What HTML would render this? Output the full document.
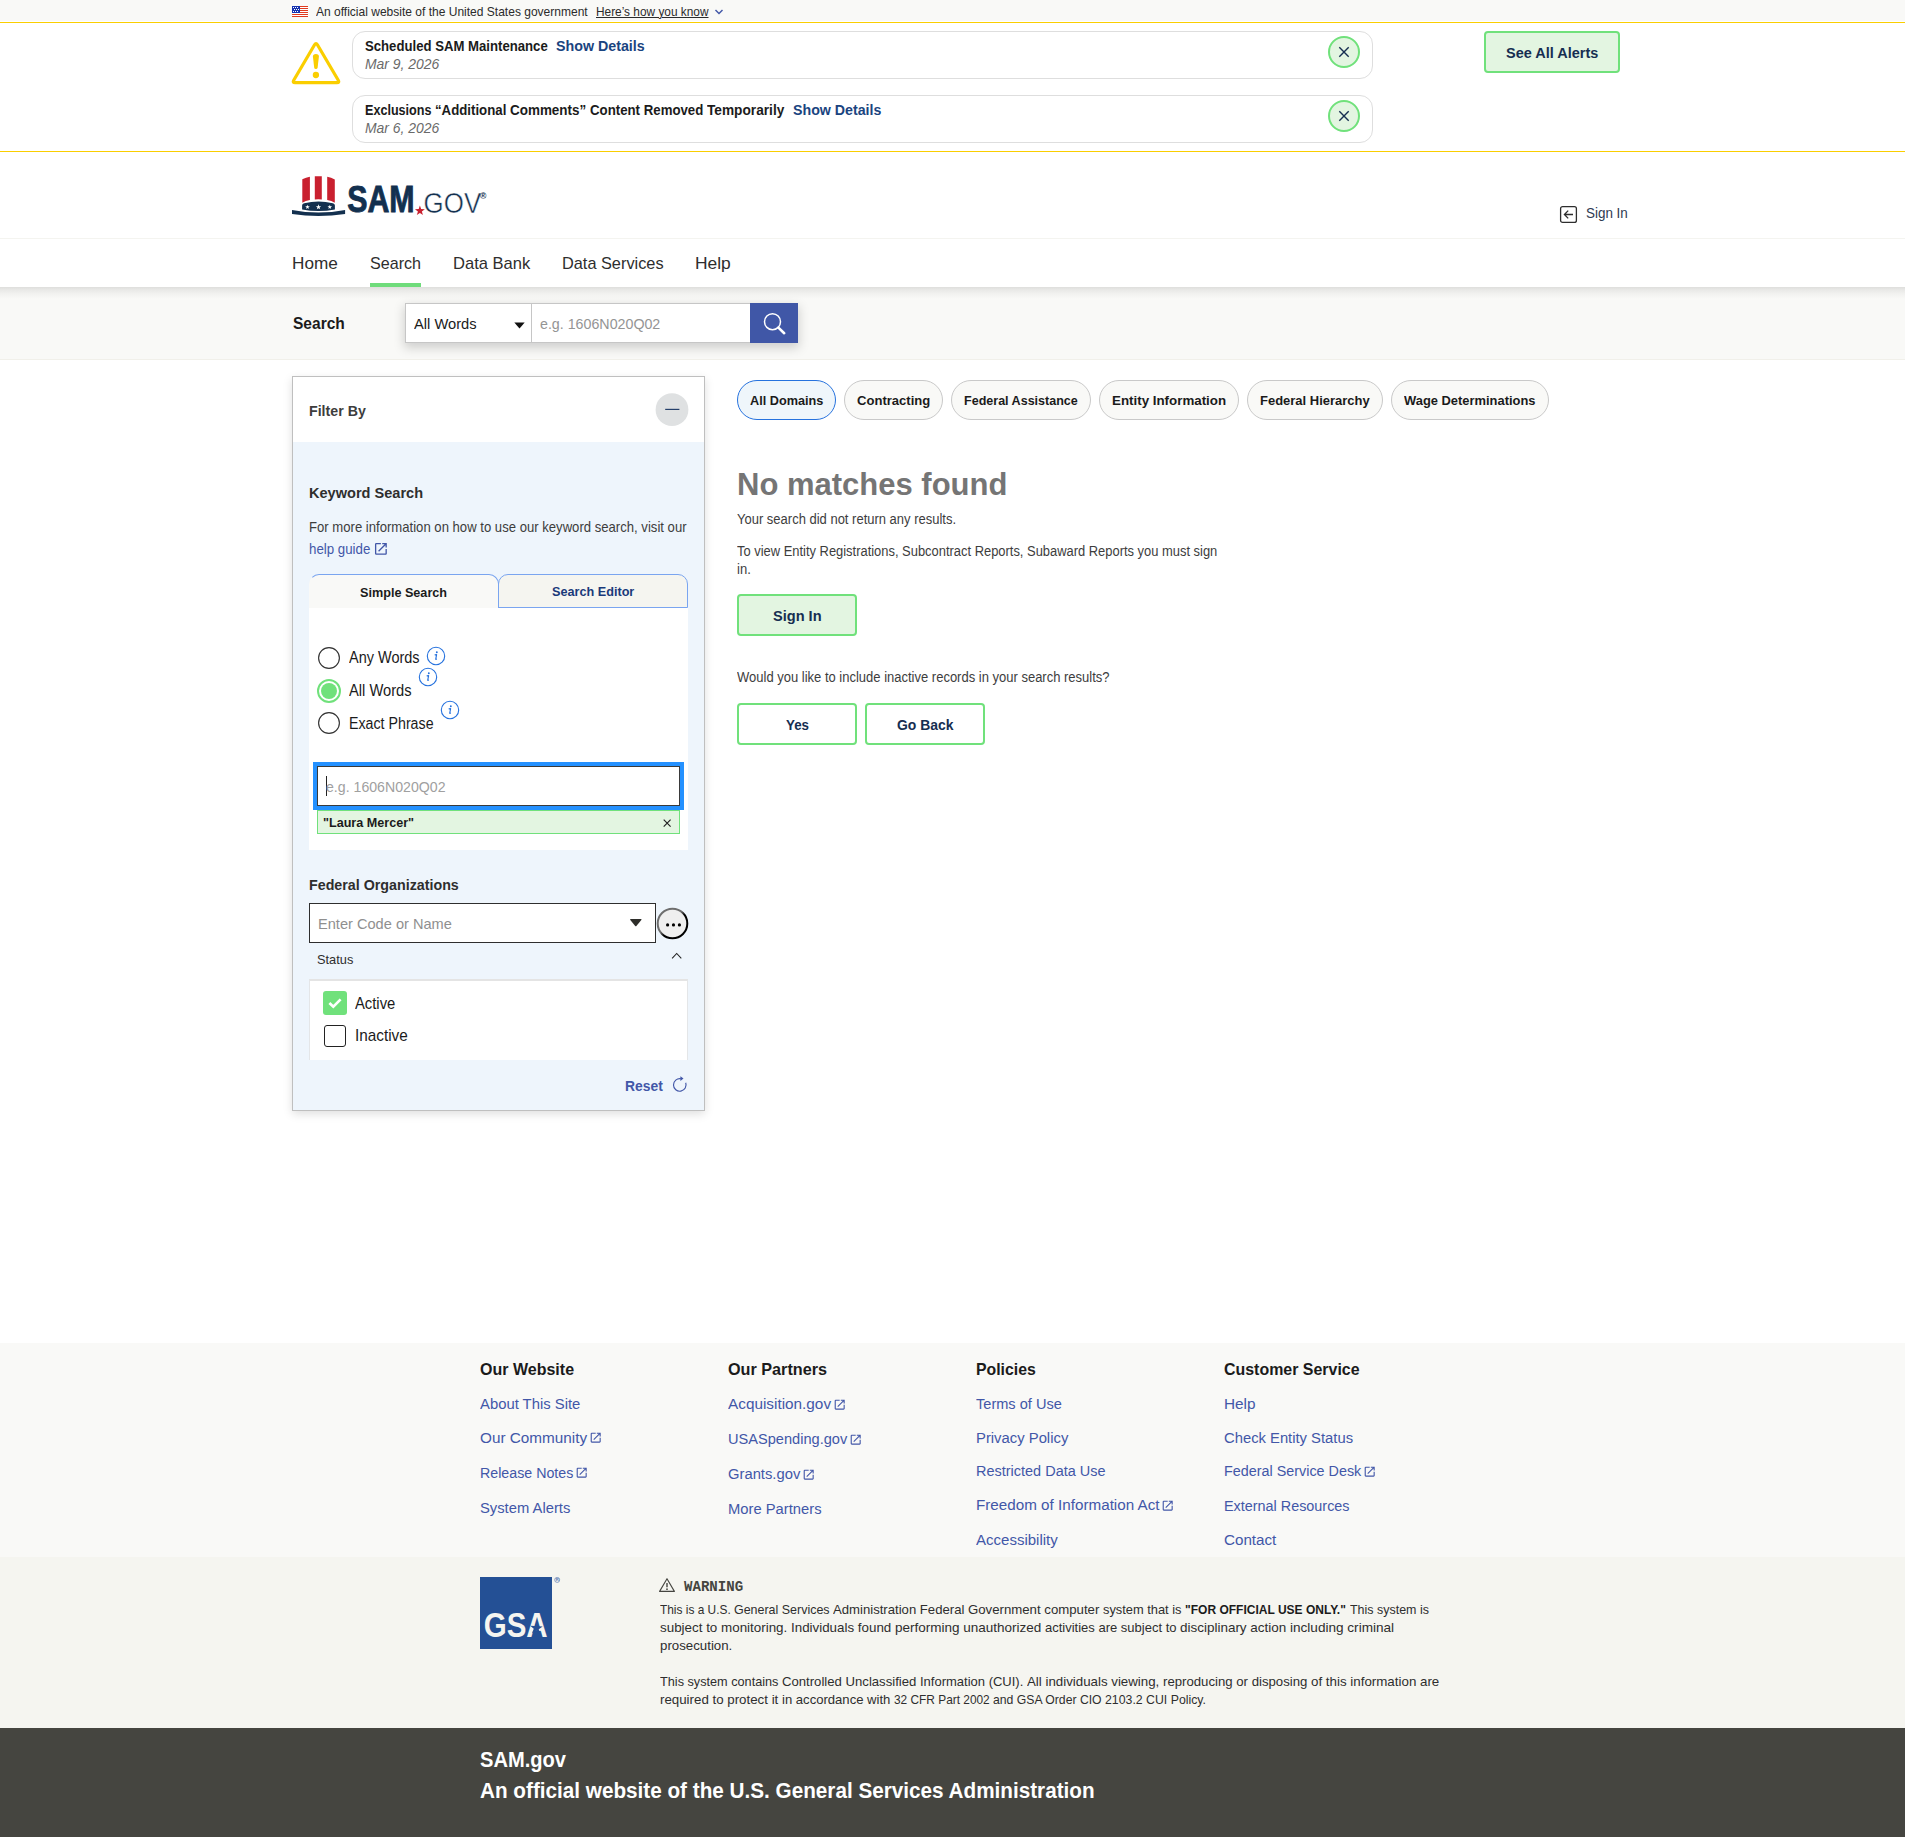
<!DOCTYPE html>
<html lang="en">
<head>
<meta charset="utf-8">
<title>SAM.gov | Search</title>
<style>
html,body{margin:0;padding:0}
body{width:1905px;height:1837px;position:relative;overflow:hidden;background:#fff;font-family:"Liberation Sans",sans-serif;color:#1b1b1b}
.abs,.a,.t{position:absolute;display:block;margin:0;padding:0}
.t{line-height:1;white-space:pre;font-weight:400;text-decoration:none;transform-origin:0 0}
a{color:inherit}
</style>
</head>
<body>
<section class="abs" aria-label="Official government website" style="left:0;top:0;width:1905px;height:21px;background:#f9f9f7"></section>
<svg class="a" style="left:292px;top:6px" width="16" height="11" viewBox="0 0 16 11" shape-rendering="crispEdges"><rect width="16" height="11" fill="#fff"/><rect y="0" width="16" height="1" fill="#e03a1e"/><rect y="2" width="16" height="1" fill="#e03a1e"/><rect y="4" width="16" height="1" fill="#e03a1e"/><rect y="6" width="16" height="1" fill="#e03a1e"/><rect y="8" width="16" height="1" fill="#e03a1e"/><rect y="10" width="16" height="1" fill="#e03a1e"/><rect width="8" height="7" fill="#1633b0"/><rect x="1" y="1" width="1" height="1" fill="#fff"/><rect x="3" y="1" width="1" height="1" fill="#fff"/><rect x="5" y="1" width="1" height="1" fill="#fff"/><rect x="2" y="3" width="1" height="1" fill="#fff"/><rect x="4" y="3" width="1" height="1" fill="#fff"/><rect x="6" y="3" width="1" height="1" fill="#fff"/><rect x="1" y="5" width="1" height="1" fill="#fff"/><rect x="3" y="5" width="1" height="1" fill="#fff"/><rect x="5" y="5" width="1" height="1" fill="#fff"/></svg>
<span class="t" style="left:316.00px;top:6.06px;font-size:12.2px;color:#2b2b2b;transform:scaleX(0.9862);">An official website of the United States government</span>
<a class="t" style="left:596.00px;top:6.06px;font-size:12.2px;color:#2b2b2b;transform:scaleX(0.9730);text-decoration:underline;text-decoration-thickness:1px;text-underline-offset:0.5px;">Here’s how you know</a>
<svg class="a" style="left:714px;top:8px" width="10" height="8" viewBox="0 0 10 8"><path d="M1.5 2 L5 5.6 L8.5 2" fill="none" stroke="#4257a8" stroke-width="1.4"/></svg>
<section class="abs" aria-label="Alerts" style="left:0;top:22px;width:1905px;height:130px;border-top:1px solid #face00;border-bottom:1px solid #face00;box-sizing:border-box;background:#fff"></section>
<svg class="a" style="left:290px;top:38px" width="52" height="48" viewBox="0 0 52 48"><path d="M24.58 6.81 Q26.00 4.40 27.42 6.81 L48.28 42.29 Q49.70 44.70 46.90 44.70 L5.10 44.70 Q2.30 44.70 3.72 42.29 Z" fill="none" stroke="#face00" stroke-width="3.2" stroke-linejoin="round"/><path d="M22.9 18.4 Q22.8 15.9 25.9 15.9 Q29 15.9 28.9 18.4 L27.6 29.7 Q27.4 31.1 25.9 31.1 Q24.4 31.1 24.2 29.7 Z" fill="#face00"/><circle cx="25.9" cy="37" r="3.15" fill="#face00"/></svg>
<div class="abs" style="left:352px;top:31px;width:1020.5px;height:47.5px;border:1px solid #dedede;border-radius:13px;box-sizing:border-box;background:#fff"></div>
<span class="t" style="left:365.00px;top:39.06px;font-size:14.6px;font-weight:700;transform:scaleX(0.9012);">Scheduled SAM Maintenance</span>
<a class="t" style="left:556.00px;top:39.06px;font-size:14.6px;font-weight:700;color:#1a4480;transform:scaleX(0.9766);">Show Details</a>
<span class="t" style="left:365.00px;top:57.06px;font-size:14.6px;color:#6a6a6a;font-style:italic;transform:scaleX(0.9539);">Mar 9, 2026</span>
<svg class="a" style="left:1328px;top:36px" width="32" height="32" viewBox="0 0 32 32"><circle cx="16" cy="16" r="15" fill="#e3f5e1" stroke="#70e17b" stroke-width="2"/><path d="M11.3 11.3 L20.7 20.7 M20.7 11.3 L11.3 20.7" stroke="#162e51" stroke-width="1.4"/></svg>
<div class="abs" style="left:352px;top:95px;width:1020.5px;height:47.5px;border:1px solid #dedede;border-radius:13px;box-sizing:border-box;background:#fff"></div>
<span class="t" style="left:365.00px;top:103.06px;font-size:14.6px;font-weight:700;transform:scaleX(0.8630);">Exclusions </span>
<span class="t" style="left:435.00px;top:103.06px;font-size:14.6px;font-weight:700;transform:scaleX(0.9069);">“Additional </span>
<span class="t" style="left:510.00px;top:103.06px;font-size:14.6px;font-weight:700;transform:scaleX(0.9220);">Comments” </span>
<span class="t" style="left:590.00px;top:103.06px;font-size:14.6px;font-weight:700;transform:scaleX(0.9075);">Content Removed </span>
<span class="t" style="left:707.00px;top:103.06px;font-size:14.6px;font-weight:700;transform:scaleX(0.9375);">Temporarily</span>
<a class="t" style="left:793.00px;top:103.06px;font-size:14.6px;font-weight:700;color:#1a4480;transform:scaleX(0.9722);">Show Details</a>
<span class="t" style="left:365.00px;top:121.07px;font-size:14.6px;color:#6a6a6a;font-style:italic;transform:scaleX(0.9539);">Mar 6, 2026</span>
<svg class="a" style="left:1328px;top:100px" width="32" height="32" viewBox="0 0 32 32"><circle cx="16" cy="16" r="15" fill="#e3f5e1" stroke="#70e17b" stroke-width="2"/><path d="M11.3 11.3 L20.7 20.7 M20.7 11.3 L11.3 20.7" stroke="#162e51" stroke-width="1.4"/></svg>
<a class="abs" style="left:1484px;top:31px;width:136px;height:42px;border:2px solid #70e17b;border-radius:4px;box-sizing:border-box;background:#e3f5e1"></a>
<span class="t" style="left:1506.00px;top:46.05px;font-size:14.8px;font-weight:700;color:#162e51;transform:scaleX(0.9787);">See All Alerts</span>
<header class="abs" style="left:0;top:152px;width:1905px;height:86px;background:#fff;border-bottom:1px solid #f4f4f0;box-sizing:content-box"></header>
<svg class="a" style="left:288px;top:170px" width="210" height="52" viewBox="288 170 210 52">
<path d="M302.3 179.2 Q306 177.4 309.9 176.8 V200.1 Q305.6 200.8 302.3 202.7 Z" fill="#c9202f"/>
<path d="M314.8 176.3 Q318.3 176.1 321.8 176.3 V199.4 Q318.3 199.2 314.8 199.4 Z" fill="#c9202f"/>
<path d="M327.2 176.8 Q331.2 177.4 334.8 179.4 V202.7 Q331.5 200.8 327.2 200.1 Z" fill="#c9202f"/>
<path d="M302.1 209.4 V205.4 Q302.1 203.7 304.2 203.3 Q318.5 199.6 332.8 203.3 Q334.9 203.7 334.9 205.4 V209.4 Q318.5 212.4 302.1 209.4 Z" fill="#13304f"/>
<path d="M292 210.1 Q318.5 215.1 345.1 210.1 L345.1 214.1 Q318.5 217.9 292 214.1 Z" fill="#13304f"/>
<g fill="#fff"><path d="M0 -2 L0.47 -0.65 L1.9 -0.62 L0.76 0.25 L1.18 1.62 L0 0.8 L-1.18 1.62 L-0.76 0.25 L-1.9 -0.62 L-0.47 -0.65 Z" transform="translate(307.5 207.1) scale(1.2)"/><path d="M0 -2 L0.47 -0.65 L1.9 -0.62 L0.76 0.25 L1.18 1.62 L0 0.8 L-1.18 1.62 L-0.76 0.25 L-1.9 -0.62 L-0.47 -0.65 Z" transform="translate(318.5 207.1) scale(1.4)"/><path d="M0 -2 L0.47 -0.65 L1.9 -0.62 L0.76 0.25 L1.18 1.62 L0 0.8 L-1.18 1.62 L-0.76 0.25 L-1.9 -0.62 L-0.47 -0.65 Z" transform="translate(329.8 207.1) scale(1.2)"/></g>
<text x="347.2" y="212.4" font-family="Liberation Sans, sans-serif" font-weight="700" font-size="36.9" fill="#13304f" stroke="#13304f" stroke-width="0.9" textLength="67.4" lengthAdjust="spacingAndGlyphs">SAM</text>
<path d="M0 -2 L0.47 -0.65 L1.9 -0.62 L0.76 0.25 L1.18 1.62 L0 0.8 L-1.18 1.62 L-0.76 0.25 L-1.9 -0.62 L-0.47 -0.65 Z" transform="translate(419.9 210.8) scale(2.6)" fill="#c9202f"/>
<text x="423.6" y="212.7" font-family="Liberation Sans, sans-serif" font-size="30" fill="#13304f" stroke="#fff" stroke-width="0.5" textLength="57.6" lengthAdjust="spacingAndGlyphs">GOV</text>
<text x="480" y="199" font-family="Liberation Sans, sans-serif" font-size="8.6" font-weight="700" fill="#13304f">®</text>
</svg>
<svg class="a" style="left:1558px;top:204px" width="21" height="21" viewBox="0 0 21 21"><rect x="2.6" y="2.6" width="15.8" height="15.8" rx="2" fill="none" stroke="#2e2e2e" stroke-width="1.3"/><path d="M15 10.5 H6.6 M10.2 6.6 L6.4 10.5 L10.2 14.4" fill="none" stroke="#2e2e2e" stroke-width="1.3"/></svg>
<a class="t" style="left:1586.00px;top:206.07px;font-size:14.6px;color:#2e3a52;transform:scaleX(0.9199);">Sign In</a>
<nav class="abs" style="left:0;top:239px;width:1905px;height:48px;background:#fff"></nav>
<a class="t" style="left:292.00px;top:255.06px;font-size:17px;color:#2e2e2e;transform:scaleX(1.0097);">Home</a>
<a class="t" style="left:370.00px;top:255.06px;font-size:17px;color:#2e2e2e;transform:scaleX(0.9476);">Search</a>
<a class="t" style="left:453.00px;top:255.06px;font-size:17px;color:#2e2e2e;transform:scaleX(0.9737);">Data Bank</a>
<a class="t" style="left:562.00px;top:255.06px;font-size:17px;color:#2e2e2e;transform:scaleX(0.9596);">Data Services</a>
<a class="t" style="left:695.00px;top:255.06px;font-size:17px;color:#2e2e2e;transform:scaleX(1.0238);">Help</a>
<div class="abs" style="left:370px;top:283px;width:51px;height:4px;background:#6fdc7b"></div>
<section class="abs" aria-label="Search" style="left:0;top:287px;width:1905px;height:73px;background:linear-gradient(#dededc 0,#e9e9e7 3px,#f2f2f0 7px,#f9f9f7 12px);border-bottom:1px solid #f1f0ea;box-sizing:border-box"></section>
<span class="t" style="left:293.00px;top:315.06px;font-size:17px;font-weight:700;transform:scaleX(0.9135);">Search</span>
<div class="abs" style="left:405px;top:303px;width:393px;height:40px;box-shadow:0 4px 10px 1px rgba(0,0,0,.17);background:#fff"></div>
<div class="abs" style="left:405px;top:303px;width:127px;height:40px;border:1px solid #c6c6c6;box-sizing:border-box;background:#fff"></div>
<div class="abs" style="left:531px;top:303px;width:219.5px;height:40px;border:1px solid #c6c6c6;box-sizing:border-box;background:#fff"></div>
<span class="t" style="left:414.00px;top:316.06px;font-size:15.2px;transform:scaleX(0.9667);">All Words</span>
<svg class="a" style="left:513.5px;top:321.5px" width="11" height="7" viewBox="0 0 11 7"><path d="M0.3 0.4 H10.7 L5.5 6.4 Z" fill="#111"/></svg>
<span class="t" style="left:540.00px;top:317.07px;font-size:14.6px;color:#949494;transform:scaleX(0.9753);">e.g. 1606N020Q02</span>
<div class="abs" style="left:750px;top:303px;width:48px;height:40px;background:#4057a7"></div>
<svg class="a" style="left:750px;top:303px" width="48" height="40" viewBox="0 0 48 40"><circle cx="22.5" cy="18.7" r="8" fill="none" stroke="#fff" stroke-width="1.5"/><path d="M28.4 24.6 L34.2 30.2" stroke="#fff" stroke-width="2.6" stroke-linecap="round"/></svg>
<aside class="abs" style="left:292px;top:376px;width:413px;height:734.5px;border:1px solid #bfbfbf;box-sizing:border-box;background:#eef5fc;box-shadow:0 3px 9px rgba(0,0,0,.13)"></aside>
<div class="abs" style="left:293px;top:377px;width:411px;height:65px;background:#fff"></div>
<h2 class="t" style="left:309.00px;top:403.06px;font-size:15.2px;font-weight:700;color:#3d3d3d;transform:scaleX(0.9347);">Filter By</h2>
<svg class="a" style="left:654.7px;top:392.8px" width="34" height="34" viewBox="0 0 34 34"><circle cx="17" cy="16.7" r="16.4" fill="#dfe1e2"/><path d="M10.2 16.4 H24.4" stroke="#25406b" stroke-width="1.2"/></svg>
<h3 class="t" style="left:309.00px;top:486.05px;font-size:14.8px;font-weight:700;color:#2e2e2e;transform:scaleX(0.9835);">Keyword Search</h3>
<span class="t" style="left:309.00px;top:520.06px;font-size:14.2px;color:#3d3d3d;transform:scaleX(0.9243);">For more information on how to use our keyword search, visit our</span>
<a class="t" style="left:309.00px;top:542.06px;font-size:14.2px;color:#4257a8;transform:scaleX(0.9361);">help guide</a>
<svg class="a" style="left:373.32px;top:541.32px" width="15.8" height="15.8" viewBox="0 0 24 24" fill="#4257a8"><path d="M19 19H5V5h7V3H5a2 2 0 0 0-2 2v14a2 2 0 0 0 2 2h14c1.1 0 2-.9 2-2v-7h-2v7zM14 3v2h3.59l-9.83 9.83 1.41 1.41L19 6.41V10h2V3h-7z"/></svg>
<div class="abs" style="left:498px;top:574px;width:190px;height:33.5px;border:1px solid #7aa5f0;border-radius:10px 10px 0 0;box-sizing:border-box;background:#f5f5f0"></div>
<div class="abs" style="left:309px;top:574px;width:189.5px;height:34.5px;border:1px solid #7aa5f0;border-bottom:none;border-left-color:transparent;border-radius:10px 10px 0 0;box-sizing:border-box;background:#f9f9f7"></div>
<span class="t" style="left:360.00px;top:586.05px;font-size:13.4px;font-weight:700;transform:scaleX(0.9432);">Simple Search</span>
<span class="t" style="left:552.00px;top:585.05px;font-size:13.4px;font-weight:700;color:#1a3a7a;transform:scaleX(0.9451);">Search Editor</span>
<div class="abs" style="left:309px;top:608px;width:379.3px;height:242px;background:#fff"></div>
<svg class="a" style="left:316px;top:645px" width="26" height="26" viewBox="0 0 26 26"><circle cx="13" cy="13" r="10.4" fill="#fff" stroke="#333" stroke-width="1.15"/></svg>
<label class="t" style="left:349.00px;top:650.06px;font-size:15.8px;transform:scaleX(0.9166);">Any Words</label>
<svg class="a" style="left:426.25px;top:645.9px" width="20" height="20" viewBox="0 0 20 20"><circle cx="10" cy="10" r="8.7" fill="none" stroke="#2672de" stroke-width="1.1"/><circle cx="10.8" cy="6.3" r="0.95" fill="#2672de"/><path d="M9.1 8.9 L10.6 8.6 L9.7 13.3 L10.5 13.1" fill="none" stroke="#2672de" stroke-width="1.15" stroke-linecap="round" stroke-linejoin="round"/></svg>
<svg class="a" style="left:316px;top:678px" width="26" height="26" viewBox="0 0 26 26"><circle cx="13" cy="13" r="11" fill="#fff" stroke="#70e17b" stroke-width="2"/><circle cx="13" cy="13" r="8" fill="#70e17b"/></svg>
<label class="t" style="left:349.00px;top:683.06px;font-size:15.8px;transform:scaleX(0.9292);">All Words</label>
<svg class="a" style="left:418.25px;top:666.9px" width="20" height="20" viewBox="0 0 20 20"><circle cx="10" cy="10" r="8.7" fill="none" stroke="#2672de" stroke-width="1.1"/><circle cx="10.8" cy="6.3" r="0.95" fill="#2672de"/><path d="M9.1 8.9 L10.6 8.6 L9.7 13.3 L10.5 13.1" fill="none" stroke="#2672de" stroke-width="1.15" stroke-linecap="round" stroke-linejoin="round"/></svg>
<svg class="a" style="left:316px;top:709.6px" width="26" height="26" viewBox="0 0 26 26"><circle cx="13" cy="13" r="10.4" fill="#fff" stroke="#333" stroke-width="1.15"/></svg>
<label class="t" style="left:349.00px;top:716.06px;font-size:15.8px;transform:scaleX(0.8999);">Exact Phrase</label>
<svg class="a" style="left:440.25px;top:700px" width="20" height="20" viewBox="0 0 20 20"><circle cx="10" cy="10" r="8.7" fill="none" stroke="#2672de" stroke-width="1.1"/><circle cx="10.8" cy="6.3" r="0.95" fill="#2672de"/><path d="M9.1 8.9 L10.6 8.6 L9.7 13.3 L10.5 13.1" fill="none" stroke="#2672de" stroke-width="1.15" stroke-linecap="round" stroke-linejoin="round"/></svg>
<div class="abs" style="left:317px;top:766px;width:363px;height:40.3px;border:1px solid #3a3a3a;box-sizing:border-box;background:#fff;outline:4px solid #2491ff;outline-offset:0"></div>
<div class="abs" style="left:326px;top:776px;width:1px;height:20px;background:#222"></div>
<span class="t" style="left:326.00px;top:780.06px;font-size:14.6px;color:#a0a0a0;transform:scaleX(0.9692);">e.g. 1606N020Q02</span>
<div class="abs" style="left:317px;top:810px;width:363px;height:24px;border:1px solid #70e17b;box-sizing:border-box;background:#e3f5e1"></div>
<span class="t" style="left:323.00px;top:817.05px;font-size:12.7px;font-weight:700;transform:scaleX(0.9927);">"Laura Mercer"</span>
<svg class="a" style="left:662px;top:818px" width="10" height="10" viewBox="0 0 10 10"><path d="M1.7 1.6 L8.6 8.6 M8.6 1.6 L1.7 8.6" stroke="#222" stroke-width="1.15"/></svg>
<h3 class="t" style="left:309.00px;top:878.05px;font-size:14.8px;font-weight:700;color:#2e2e2e;transform:scaleX(0.9639);">Federal Organizations</h3>
<div class="abs" style="left:309px;top:903px;width:347px;height:39.5px;border:1px solid #2e2e2e;box-sizing:border-box;background:#fff"></div>
<span class="t" style="left:318.00px;top:917.06px;font-size:14.6px;color:#8f8f8f;">Enter Code or Name</span>
<svg class="a" style="left:629.4px;top:918.2px" width="14" height="10" viewBox="0 0 14 10"><path d="M1.7 1 H11.9 Q13 1 12.3 1.9 L7.4 8 Q6.8 8.7 6.2 8 L1.3 1.9 Q0.6 1 1.7 1 Z" fill="#2e2e2a"/></svg>
<svg class="a" style="left:655.5px;top:906.6px" width="33" height="33" viewBox="0 0 33 33"><defs><linearGradient id="ob" x1="0.15" y1="0.15" x2="0.85" y2="0.85"><stop offset="0.42" stop-color="#6e6e6e"/><stop offset="0.58" stop-color="#000"/></linearGradient></defs><circle cx="16.5" cy="16.5" r="14.8" fill="#efefef" stroke="url(#ob)" stroke-width="2"/><circle cx="11.6" cy="17.9" r="1.6" fill="#000"/><circle cx="17.5" cy="17.9" r="1.6" fill="#000"/><circle cx="23.4" cy="17.9" r="1.6" fill="#000"/></svg>
<span class="t" style="left:317.00px;top:953.05px;font-size:13px;color:#2e2e2e;transform:scaleX(0.9848);">Status</span>
<svg class="a" style="left:670px;top:949.5px" width="14" height="11" viewBox="0 0 14 11"><path d="M2.1 8.3 L6.7 3.4 L11.3 8.3" fill="none" stroke="#222" stroke-width="1.05"/></svg>
<div class="abs" style="left:309px;top:979px;width:379.3px;height:80.5px;border:1px solid #e4e6e8;border-top:2px solid #e4e4e4;border-bottom:none;box-sizing:border-box;background:#fff"></div>
<svg class="a" style="left:323px;top:991px" width="24" height="24" viewBox="0 0 24 24"><rect width="24" height="24" rx="3" fill="#70e17b"/><path d="M6.4 12 L10.3 15.7 L17.6 8.4" fill="none" stroke="#fff" stroke-width="2.7"/></svg>
<label class="t" style="left:355.00px;top:996.06px;font-size:15.7px;transform:scaleX(0.9430);">Active</label>
<div class="abs" style="left:324px;top:1025px;width:22px;height:22px;border:1.5px solid #222;border-radius:3px;box-sizing:border-box;background:#fff"></div>
<label class="t" style="left:355.00px;top:1028.06px;font-size:15.7px;transform:scaleX(0.9764);">Inactive</label>
<a class="t" style="left:625.00px;top:1079.05px;font-size:14.8px;font-weight:700;color:#4257a8;transform:scaleX(0.9377);">Reset</a>
<svg class="a" style="left:671px;top:1075px" width="18" height="18" viewBox="0 0 18 18"><path d="M14.72 7.75 A6.3 6.3 0 1 1 9.89 3.70" fill="none" stroke="#4257a8" stroke-width="1.15"/><path d="M9.40 1.20 L12.50 3.60 L9.40 6.00 Z" fill="#4257a8"/></svg>
<a class="abs" style="left:737px;top:380px;width:99px;height:40px;border:1px solid #2672de;background:#eff6fb;border-radius:20px;box-sizing:border-box"></a>
<span class="t" style="left:750.00px;top:394.05px;font-size:13.3px;font-weight:700;transform:scaleX(0.9539);">All Domains</span>
<a class="abs" style="left:844px;top:380px;width:99px;height:40px;border:1px solid #c9c9c9;background:#f9f9f7;border-radius:20px;box-sizing:border-box"></a>
<span class="t" style="left:857.00px;top:394.05px;font-size:13.3px;font-weight:700;transform:scaleX(0.9825);">Contracting</span>
<a class="abs" style="left:951px;top:380px;width:139.75px;height:40px;border:1px solid #c9c9c9;background:#f9f9f7;border-radius:20px;box-sizing:border-box"></a>
<span class="t" style="left:964.00px;top:394.05px;font-size:13.3px;font-weight:700;transform:scaleX(0.9427);">Federal Assistance</span>
<a class="abs" style="left:1099px;top:380px;width:140px;height:40px;border:1px solid #c9c9c9;background:#f9f9f7;border-radius:20px;box-sizing:border-box"></a>
<span class="t" style="left:1112.00px;top:394.05px;font-size:13.3px;font-weight:700;transform:scaleX(1.0029);">Entity Information</span>
<a class="abs" style="left:1247px;top:380px;width:136px;height:40px;border:1px solid #c9c9c9;background:#f9f9f7;border-radius:20px;box-sizing:border-box"></a>
<span class="t" style="left:1260.00px;top:394.05px;font-size:13.3px;font-weight:700;transform:scaleX(0.9765);">Federal Hierarchy</span>
<a class="abs" style="left:1391px;top:380px;width:157.5999999999999px;height:40px;border:1px solid #c9c9c9;background:#f9f9f7;border-radius:20px;box-sizing:border-box"></a>
<span class="t" style="left:1404.00px;top:394.05px;font-size:13.3px;font-weight:700;transform:scaleX(0.9707);">Wage Determinations</span>
<h1 class="t" style="left:737.00px;top:469.06px;font-size:31px;font-weight:700;color:#757575;">No matches found</h1>
<p class="t" style="left:737.00px;top:513.06px;font-size:13.8px;color:#3d3d3d;transform:scaleX(0.9416);">Your search did not return any results.</p>
<p class="t" style="left:737.00px;top:545.06px;font-size:13.8px;color:#3d3d3d;transform:scaleX(0.9362);">To view Entity Registrations, Subcontract Reports, Subaward Reports you must sign</p>
<p class="t" style="left:737.00px;top:563.06px;font-size:13.8px;color:#3d3d3d;transform:scaleX(0.9466);">in.</p>
<a class="abs" style="left:737px;top:594px;width:120px;height:42px;border:2px solid #70e17b;border-radius:4px;box-sizing:border-box;background:#e3f5e1"></a>
<span class="t" style="left:773.00px;top:609.05px;font-size:14.8px;font-weight:700;color:#162e51;transform:scaleX(0.9842);">Sign In</span>
<p class="t" style="left:737.00px;top:671.06px;font-size:13.8px;color:#3d3d3d;transform:scaleX(0.9421);">Would you like to include inactive records in your search results?</p>
<a class="abs" style="left:737px;top:703px;width:120px;height:42px;border:2px solid #70e17b;border-radius:4px;box-sizing:border-box;background:#fff"></a>
<span class="t" style="left:786.00px;top:718.05px;font-size:14.8px;font-weight:700;color:#162e51;transform:scaleX(0.9034);">Yes</span>
<a class="abs" style="left:865px;top:703px;width:120px;height:42px;border:2px solid #70e17b;border-radius:4px;box-sizing:border-box;background:#fff"></a>
<span class="t" style="left:897.00px;top:718.05px;font-size:14.8px;font-weight:700;color:#162e51;transform:scaleX(0.9418);">Go Back</span>
<footer class="abs" style="left:0;top:1343px;width:1905px;height:214px;background:#f9f9f7"></footer>
<div class="abs" style="left:0px;top:1557px;width:1905px;height:171px;background:#f5f5f0"></div>
<div class="abs" style="left:0px;top:1728px;width:1905px;height:109px;background:#454540"></div>
<h4 class="t" style="left:480.00px;top:1361.06px;font-size:16.2px;font-weight:700;transform:scaleX(0.9895);">Our Website</h4>
<h4 class="t" style="left:728.00px;top:1361.06px;font-size:16.2px;font-weight:700;">Our Partners</h4>
<h4 class="t" style="left:976.00px;top:1361.06px;font-size:16.2px;font-weight:700;transform:scaleX(0.9773);">Policies</h4>
<h4 class="t" style="left:1224.00px;top:1361.06px;font-size:16.2px;font-weight:700;transform:scaleX(0.9846);">Customer Service</h4>
<a class="t" style="left:480.00px;top:1396.05px;font-size:15.2px;color:#4257a8;transform:scaleX(0.9765);">About This Site</a>
<a class="t" style="left:480.00px;top:1430.05px;font-size:15.2px;color:#4257a8;transform:scaleX(1.0066);">Our Community</a>
<svg class="a" style="left:588.78px;top:1430.92px" width="13.4" height="13.4" viewBox="0 0 24 24" fill="#4257a8"><path d="M19 19H5V5h7V3H5a2 2 0 0 0-2 2v14a2 2 0 0 0 2 2h14c1.1 0 2-.9 2-2v-7h-2v7zM14 3v2h3.59l-9.83 9.83 1.41 1.41L19 6.41V10h2V3h-7z"/></svg>
<a class="t" style="left:480.00px;top:1465.05px;font-size:15.2px;color:#4257a8;transform:scaleX(0.9365);">Release Notes</a>
<svg class="a" style="left:575.03px;top:1465.92px" width="13.4" height="13.4" viewBox="0 0 24 24" fill="#4257a8"><path d="M19 19H5V5h7V3H5a2 2 0 0 0-2 2v14a2 2 0 0 0 2 2h14c1.1 0 2-.9 2-2v-7h-2v7zM14 3v2h3.59l-9.83 9.83 1.41 1.41L19 6.41V10h2V3h-7z"/></svg>
<a class="t" style="left:480.00px;top:1500.05px;font-size:15.2px;color:#4257a8;transform:scaleX(0.9726);">System Alerts</a>
<a class="t" style="left:728.00px;top:1396.05px;font-size:15.2px;color:#4257a8;transform:scaleX(1.0087);">Acquisition.gov</a>
<svg class="a" style="left:832.78px;top:1397.92px" width="13.4" height="13.4" viewBox="0 0 24 24" fill="#4257a8"><path d="M19 19H5V5h7V3H5a2 2 0 0 0-2 2v14a2 2 0 0 0 2 2h14c1.1 0 2-.9 2-2v-7h-2v7zM14 3v2h3.59l-9.83 9.83 1.41 1.41L19 6.41V10h2V3h-7z"/></svg>
<a class="t" style="left:728.00px;top:1431.05px;font-size:15.2px;color:#4257a8;transform:scaleX(0.9611);">USASpending.gov</a>
<svg class="a" style="left:849.03px;top:1432.92px" width="13.4" height="13.4" viewBox="0 0 24 24" fill="#4257a8"><path d="M19 19H5V5h7V3H5a2 2 0 0 0-2 2v14a2 2 0 0 0 2 2h14c1.1 0 2-.9 2-2v-7h-2v7zM14 3v2h3.59l-9.83 9.83 1.41 1.41L19 6.41V10h2V3h-7z"/></svg>
<a class="t" style="left:728.00px;top:1466.05px;font-size:15.2px;color:#4257a8;transform:scaleX(0.9731);">Grants.gov</a>
<svg class="a" style="left:802.03px;top:1467.92px" width="13.4" height="13.4" viewBox="0 0 24 24" fill="#4257a8"><path d="M19 19H5V5h7V3H5a2 2 0 0 0-2 2v14a2 2 0 0 0 2 2h14c1.1 0 2-.9 2-2v-7h-2v7zM14 3v2h3.59l-9.83 9.83 1.41 1.41L19 6.41V10h2V3h-7z"/></svg>
<a class="t" style="left:728.00px;top:1501.05px;font-size:15.2px;color:#4257a8;transform:scaleX(0.9721);">More Partners</a>
<a class="t" style="left:976.00px;top:1396.05px;font-size:15.2px;color:#4257a8;transform:scaleX(0.9590);">Terms of Use</a>
<a class="t" style="left:976.00px;top:1430.05px;font-size:15.2px;color:#4257a8;transform:scaleX(0.9764);">Privacy Policy</a>
<a class="t" style="left:976.00px;top:1463.05px;font-size:15.2px;color:#4257a8;transform:scaleX(0.9532);">Restricted Data Use</a>
<a class="t" style="left:976.00px;top:1497.05px;font-size:15.2px;color:#4257a8;transform:scaleX(1.0020);">Freedom of Information Act</a>
<svg class="a" style="left:1161.28px;top:1498.92px" width="13.4" height="13.4" viewBox="0 0 24 24" fill="#4257a8"><path d="M19 19H5V5h7V3H5a2 2 0 0 0-2 2v14a2 2 0 0 0 2 2h14c1.1 0 2-.9 2-2v-7h-2v7zM14 3v2h3.59l-9.83 9.83 1.41 1.41L19 6.41V10h2V3h-7z"/></svg>
<a class="t" style="left:976.00px;top:1532.05px;font-size:15.2px;color:#4257a8;transform:scaleX(0.9889);">Accessibility</a>
<a class="t" style="left:1224.00px;top:1396.05px;font-size:15.2px;color:#4257a8;transform:scaleX(1.0096);">Help</a>
<a class="t" style="left:1224.00px;top:1430.05px;font-size:15.2px;color:#4257a8;transform:scaleX(0.9737);">Check Entity Status</a>
<a class="t" style="left:1224.00px;top:1463.05px;font-size:15.2px;color:#4257a8;transform:scaleX(0.9457);">Federal Service Desk</a>
<svg class="a" style="left:1363.03px;top:1464.92px" width="13.4" height="13.4" viewBox="0 0 24 24" fill="#4257a8"><path d="M19 19H5V5h7V3H5a2 2 0 0 0-2 2v14a2 2 0 0 0 2 2h14c1.1 0 2-.9 2-2v-7h-2v7zM14 3v2h3.59l-9.83 9.83 1.41 1.41L19 6.41V10h2V3h-7z"/></svg>
<a class="t" style="left:1224.00px;top:1498.05px;font-size:15.2px;color:#4257a8;transform:scaleX(0.9473);">External Resources</a>
<a class="t" style="left:1224.00px;top:1532.05px;font-size:15.2px;color:#4257a8;">Contact</a>
<svg class="a" style="left:480px;top:1577px" width="84" height="72" viewBox="0 0 84 72"><rect width="72" height="72" fill="#245095"/><text x="3.7" y="60.3" font-family="Liberation Sans, sans-serif" font-weight="700" font-size="34.4" fill="#f5f5f0" textLength="64" lengthAdjust="spacingAndGlyphs">GSA</text><path d="M0 -2 L0.47 -0.65 L1.9 -0.62 L0.76 0.25 L1.18 1.62 L0 0.8 L-1.18 1.62 L-0.76 0.25 L-1.9 -0.62 L-0.47 -0.65 Z" transform="translate(56.3 51.2) rotate(4) scale(3.3)" fill="#245095"/><circle cx="77.2" cy="2.9" r="2.5" fill="none" stroke="#5d7db3" stroke-width="0.7"/><text x="75.7" y="4.4" font-family="Liberation Sans, sans-serif" font-size="4.2" font-weight="700" fill="#5d7db3">R</text></svg>
<svg class="a" style="left:658px;top:1577px" width="18" height="16" viewBox="0 0 18 16"><path d="M9 1.7 L16.4 14.4 H1.6 Z" fill="none" stroke="#454540" stroke-width="1.1" stroke-linejoin="round"/><path d="M9 6 V10.2" stroke="#454540" stroke-width="1.4"/><circle cx="9" cy="12.2" r="0.85" fill="#454540"/></svg>
<span class="t" style="left:684.00px;top:1580.06px;font-size:14.1px;font-weight:700;color:#454540;font-family:Liberation Mono,monospace;">WARNING</span>
<span class="t" style="left:660.00px;top:1603.05px;font-size:13px;color:#2e2e2e;transform:scaleX(0.9145);">This is a U.S. </span>
<span class="t" style="left:734.00px;top:1603.05px;font-size:13px;color:#2e2e2e;transform:scaleX(0.9581);">General Services </span>
<span class="t" style="left:833.00px;top:1603.05px;font-size:13px;color:#2e2e2e;transform:scaleX(1.0099);">Administration Federal </span>
<span class="t" style="left:968.00px;top:1603.05px;font-size:13px;color:#2e2e2e;transform:scaleX(1.0154);">Government computer </span>
<span class="t" style="left:1103.00px;top:1603.05px;font-size:13px;color:#2e2e2e;transform:scaleX(0.9878);">system that is</span>
<span class="t" style="left:1185.00px;top:1603.05px;font-size:13px;font-weight:700;transform:scaleX(0.9240);">"FOR OFFICIAL USE ONLY."</span>
<span class="t" style="left:1350.00px;top:1603.05px;font-size:13px;color:#2e2e2e;transform:scaleX(0.9582);">This system is</span>
<span class="t" style="left:660.00px;top:1621.05px;font-size:13px;color:#2e2e2e;transform:scaleX(1.0300);">subject to monitoring. </span>
<span class="t" style="left:791.00px;top:1621.05px;font-size:13px;color:#2e2e2e;transform:scaleX(1.0278);">Individuals found </span>
<span class="t" style="left:895.00px;top:1621.05px;font-size:13px;color:#2e2e2e;transform:scaleX(1.0378);">performing unauthorized </span>
<span class="t" style="left:1045.00px;top:1621.05px;font-size:13px;color:#2e2e2e;">activities are subject to </span>
<span class="t" style="left:1180.00px;top:1621.05px;font-size:13px;color:#2e2e2e;transform:scaleX(1.0356);">disciplinary action </span>
<span class="t" style="left:1290.00px;top:1621.05px;font-size:13px;color:#2e2e2e;transform:scaleX(1.0439);">including criminal</span>
<span class="t" style="left:660.00px;top:1639.05px;font-size:13px;color:#2e2e2e;transform:scaleX(1.0208);">prosecution.</span>
<span class="t" style="left:660.00px;top:1675.05px;font-size:13px;color:#2e2e2e;transform:scaleX(0.9760);">This system contains </span>
<span class="t" style="left:782.00px;top:1675.05px;font-size:13px;color:#2e2e2e;transform:scaleX(1.0104);">Controlled Unclassified </span>
<span class="t" style="left:920.00px;top:1675.05px;font-size:13px;color:#2e2e2e;">Information (CUI). </span>
<span class="t" style="left:1027.00px;top:1675.05px;font-size:13px;color:#2e2e2e;transform:scaleX(1.0229);">All individuals viewing, </span>
<span class="t" style="left:1163.00px;top:1675.05px;font-size:13px;color:#2e2e2e;transform:scaleX(1.0138);">reproducing or disposing </span>
<span class="t" style="left:1311.00px;top:1675.05px;font-size:13px;color:#2e2e2e;transform:scaleX(1.0263);">of this information are</span>
<span class="t" style="left:660.00px;top:1693.05px;font-size:13px;color:#2e2e2e;transform:scaleX(1.0232);">required to protect it </span>
<span class="t" style="left:782.00px;top:1693.05px;font-size:13px;color:#2e2e2e;transform:scaleX(1.0065);">in accordance with </span>
<span class="t" style="left:894.00px;top:1693.05px;font-size:13px;color:#2e2e2e;transform:scaleX(0.9134);">32 CFR Part 2002 </span>
<span class="t" style="left:993.00px;top:1693.05px;font-size:13px;color:#2e2e2e;transform:scaleX(0.9394);">and GSA Order CIO </span>
<span class="t" style="left:1105.00px;top:1693.05px;font-size:13px;color:#2e2e2e;transform:scaleX(0.9466);">2103.2 CUI Policy.</span>
<span class="t" style="left:480.00px;top:1749.06px;font-size:22.3px;font-weight:700;color:#fff;transform:scaleX(0.9016);">SAM.gov</span>
<span class="t" style="left:480.00px;top:1780.06px;font-size:22.3px;font-weight:700;color:#fff;transform:scaleX(0.9283);">An official website of the U.S. General Services Administration</span>
</body>
</html>
